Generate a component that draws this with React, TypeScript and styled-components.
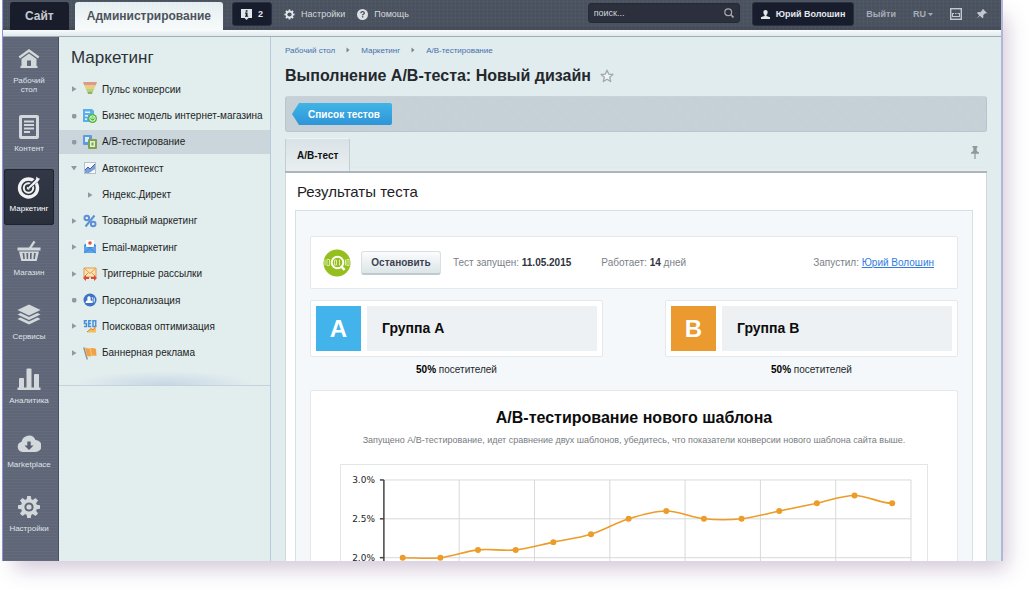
import React from "react";
import styled, { createGlobalStyle, css } from "styled-components";

const GlobalStyle = createGlobalStyle`
  * { box-sizing: border-box; }
  html, body { margin: 0; background: #fff; overflow: hidden; }
  body, button, input, select { font-family: "Liberation Sans", Arial, sans-serif; }
  ul, h1, h2, h3, p { margin: 0; padding: 0; }
  ul { list-style: none; }
  svg { display: block; flex: none; }
`;

/* ---------- Window ---------- */

const Page = styled.div`
  height: 100vh;
  padding: 0 26px 35px 2px;
  overflow: hidden;
`;

const Window = styled.div`
  display: flex;
  flex-direction: column;
  height: 100%;
  overflow: hidden;
  border-left: 1px solid #8c95cf;
  border-right: 2px solid #b2b7d8;
  background: #e1ecee;
  box-shadow: 8px 12px 20px -4px #d3c8d8;
`;

const Body = styled.div`
  display: flex;
  flex: 1;
  min-height: 0;
`;

/* ---------- Top bar ---------- */

const TopBar = styled.header`
  display: flex;
  justify-content: space-between;
  height: 30px;
  flex: none;
  padding: 2px 13px 0 7px;
  background:
    repeating-linear-gradient(90deg, #ffffff06 0 1px, #00000000 1px 4px),
    repeating-linear-gradient(0deg, #ffffff06 0 1px, #00000000 1px 4px),
    linear-gradient(#4b525f, #4a515e 85%, #414753);
`;

const Strip = styled.div`
  height: 7px;
  flex: none;
  background: linear-gradient(#f8fbfc, #dfe9ec);
  border-bottom: 1px solid #a4adb6;
`;

const BarSide = styled.div`
  display: flex;
  align-items: flex-start;
`;

const ModeTab = styled.a<{ $active?: boolean }>`
  display: flex;
  align-items: center;
  height: 28px;
  padding: 0 ${(p) => (p.$active ? 12 : 15)}px;
  margin-right: ${(p) => (p.$active ? 9 : 6)}px;
  border-radius: 3px 3px 0 0;
  font-size: 12px;
  font-weight: bold;
  text-decoration: none;
  color: ${(p) => (p.$active ? "#4d525c" : "#c6cad0")};
  background: ${(p) => (p.$active ? "linear-gradient(#e4edef, #f8fbfc)" : "#191d2b")};
`;

const DarkButton = styled.button`
  display: flex;
  align-items: center;
  justify-content: center;
  gap: 6px;
  height: 24px;
  padding: 0 8px;
  border: 1px solid #2a303e;
  border-radius: 3px;
  background: #171d2c;
  color: #e4e7ec;
  font-size: 9px;
  font-weight: bold;
  white-space: nowrap;
`;

const BarLink = styled.a`
  display: flex;
  align-items: center;
  gap: 6px;
  height: 24px;
  margin-left: 12px;
  color: #d5d9de;
  font-size: 9px;
  text-decoration: none;
`;

const Search = styled.label`
  display: flex;
  align-items: center;
  width: 152px;
  height: 20px;
  margin: 1px 12px 0 0;
  padding: 0 5px;
  border: 1px solid #262a36;
  border-radius: 3px;
  background: #2c303d;
`;

const SearchInput = styled.input`
  flex: 1;
  min-width: 0;
  padding: 0;
  border: 0;
  outline: 0;
  background: transparent;
  color: #e4e7ec;
  font-size: 9px;
  &::placeholder { color: #d0d4da; opacity: 1; }
`;

const MutedLink = styled(BarLink)`
  color: #a6acb6;
  font-weight: bold;
`;

const LangBox = styled.span`
  display: flex;
  align-items: center;
  gap: 2px;
  height: 24px;
  margin: 0 17px;
`;

const LangSelect = styled.select`
  appearance: none;
  padding: 0;
  border: 0;
  background: transparent;
  color: #a6acb6;
  font-size: 9px;
  font-weight: bold;
`;

const IconButton = styled.button`
  display: flex;
  align-items: center;
  height: 24px;
  padding: 0;
  margin-right: 14px;
  border: 0;
  background: none;
  &:last-child { margin-right: 0; }
`;

/* ---------- Section rail ---------- */

const Rail = styled.nav`
  display: flex;
  flex-direction: column;
  gap: 4px;
  width: 56px;
  flex: none;
  padding: 4px 4px 0 1px;
  background:
    repeating-linear-gradient(0deg, #ffffff08 0 1px, #00000000 1px 3px),
    #5f6678;
  border-right: 1px solid #4a5163;
`;

const RailGroup = styled.ul<{ $gap: number }>`
  display: flex;
  flex-direction: column;
  gap: ${(p) => p.$gap}px;
`;

const RailLink = styled.a<{ $active?: boolean }>`
  display: flex;
  flex-direction: column;
  align-items: center;
  gap: 5px;
  min-height: 56px;
  padding: 6px 0 11px;
  border-radius: 3px;
  color: #dfe3e8;
  font-size: 8px;
  line-height: 9px;
  text-align: center;
  white-space: pre-line;
  text-decoration: none;
  ${(p) =>
    p.$active &&
    css`
      background: linear-gradient(#333846, #2a2f3c);
      box-shadow: 0 0 0 1px #1f2430 inset;
      color: #fff;
    `}
`;

/* ---------- Tree menu ---------- */

const Side = styled.aside`
  width: 212px;
  flex: none;
  border-right: 1px solid #b7cade;
  background: #e2edee;
`;

const SideInner = styled.div`
  height: 349px;
  padding-top: 12px;
  border-bottom: 1px solid #c5d3dd;
  background: radial-gradient(90px 14px at 50% 100%, #c6d6e5, #c6d6e500);
`;

const SideTitle = styled.h2`
  padding-left: 12px;
  font-size: 17px;
  line-height: 18px;
  font-weight: normal;
  color: #2d3138;
`;

const Tree = styled.ul`
  display: grid;
  grid-auto-rows: 1fr;
  height: 290px;
  margin-top: 9px;
`;

const TreeItem = styled.li<{ $active?: boolean }>`
  display: flex;
  margin: 1px 0;
  background: ${(p) => (p.$active ? "#cbd6dc" : "transparent")};
`;

const TreeLink = styled.a<{ $nested?: boolean }>`
  display: flex;
  align-items: center;
  gap: 5px;
  padding-left: ${(p) => (p.$nested ? 24 : 11)}px;
  color: #1c1f24;
  font-size: 10px;
  white-space: nowrap;
  text-decoration: none;
`;

const Marker = styled.span<{ $nested?: boolean }>`
  display: flex;
  justify-content: center;
  width: ${(p) => (p.$nested ? 14 : 8)}px;
`;

/* ---------- Content ---------- */

const Content = styled.main`
  flex: 1;
  min-width: 0;
  padding: 7px 14px 0;
  overflow: hidden;
`;

const Crumbs = styled.nav`
  display: flex;
  align-items: center;
  gap: 11px;
  height: 12px;
`;

const CrumbLink = styled.a`
  color: #4470aa;
  font-size: 8px;
  text-decoration: none;
`;

const TitleRow = styled.div`
  display: flex;
  align-items: center;
  gap: 9px;
  height: 20px;
  margin-top: 10px;
`;

const Title = styled.h1`
  font-size: 16px;
  line-height: 20px;
  color: #24272c;
`;

const ToolBar = styled.div`
  display: flex;
  align-items: center;
  height: 36px;
  margin-top: 10px;
  padding: 0 6px;
  border: 1px solid #b9c5cc;
  border-top-color: #c8d2d8;
  border-radius: 3px;
  background: repeating-linear-gradient(45deg, #c7d2d8 0 1px, #c4cfd6 1px 2px);
`;

const BackButton = styled.button`
  height: 22px;
  width: 100px;
  padding: 0 0 0 4px;
  border: 0;
  border-radius: 2px;
  background: linear-gradient(#3fb5e6, #2f94d8);
  clip-path: polygon(7px 0, 100% 0, 100% 100%, 7px 100%, 0 50%);
  color: #fff;
  font-size: 10px;
  font-weight: bold;
`;

const Tabs = styled.div`
  display: flex;
  justify-content: space-between;
  align-items: flex-start;
  height: 35px;
  margin-top: 6px;
  border-bottom: 2px solid #aab5bc;
  background: linear-gradient(#dfe8ea, #eaf0f2) 0 100% / 100% 4px no-repeat;
`;

const Tab = styled.button`
  height: 33px;
  padding: 0 11px;
  border: 1px solid #c3cdd2;
  border-top-color: #edf3f4;
  border-bottom: 0;
  border-radius: 2px 2px 0 0;
  background: linear-gradient(#d9e2e5, #e9eff1);
  color: #111;
  font-size: 10px;
  font-weight: bold;
`;

const PinButton = styled.button`
  margin: 8px 8px 0 0;
  padding: 0;
  border: 0;
  background: none;
`;

const Panel = styled.section`
  padding: 10px 13px 0 9px;
  background: #fff;
  border-left: 1px solid #cfd9dd;
  border-right: 1px solid #cfd9dd;
`;

const PanelTitle = styled.h2`
  padding-left: 2px;
  font-size: 15px;
  line-height: 18px;
  font-weight: normal;
  color: #1e2125;
`;

const Well = styled.div`
  display: flex;
  flex-direction: column;
  gap: 11px;
  margin-top: 9px;
  padding: 25px 14px 40px;
  border: 1px solid #d6e1e6;
  background: #f4f8fa;
`;

const Card = styled.div`
  border: 1px solid #e6e9eb;
  border-radius: 2px;
  background: #fff;
`;

const StatusCard = styled(Card)`
  display: flex;
  align-items: center;
  height: 53px;
  padding: 0 23px 0 12px;
  color: #7c8087;
  font-size: 10px;
  white-space: nowrap;
  b { color: #2f3340; }
`;

const StopButton = styled.button`
  height: 24px;
  width: 80px;
  margin: 0 12px 0 10px;
  padding: 0;
  border: 1px solid #d9e0e3;
  border-bottom: 2px solid #bfc9ce;
  border-radius: 3px;
  background: linear-gradient(#fbfcfd, #dce5e8);
  color: #3b4150;
  font-size: 10px;
  font-weight: bold;
`;

const Running = styled.span`
  margin-left: 30px;
`;

const Author = styled.span`
  margin-left: auto;
  a { color: #2f7de0; }
`;

const Groups = styled.div`
  display: grid;
  grid-template-columns: 1fr 1fr;
  gap: 62px;
`;

const GroupCard = styled(Card)`
  display: flex;
  gap: 6px;
  padding: 5px;
`;

const Letter = styled.span<{ $color: string }>`
  display: flex;
  align-items: center;
  justify-content: center;
  width: 45px;
  height: 45px;
  background: ${(p) => p.$color};
  color: #fff;
  font-size: 24px;
  font-weight: bold;
`;

const GroupName = styled.h3`
  flex: 1;
  padding-left: 15px;
  background: #edf1f4;
  color: #0c0c0c;
  font-size: 14px;
  line-height: 45px;
`;

const Share = styled.p`
  margin-top: 6px;
  font-size: 10px;
  line-height: 14px;
  text-align: center;
  color: #25282d;
  b { color: #000; }
`;

const ReportCard = styled(Card)`
  padding: 17px 29px 20px;
  margin-top: 2px;
  text-align: center;
`;

const ReportTitle = styled.h3`
  font-size: 16px;
  line-height: 20px;
  color: #0c0c0c;
`;

const ReportText = styled.p`
  margin-top: 6px;
  font-size: 9px;
  line-height: 12px;
  color: #777b80;
`;

const ChartFrame = styled.div`
  margin-top: 18px;
  border: 1px solid #e4e5e7;
  svg { width: 100%; height: auto; }
`;

/* ---------- Rail icons ---------- */

const RailIcon = ({ children }: { children: React.ReactNode }) => (
  <svg width="24" height="24" viewBox="0 0 24 24" fill="#d3d8da">
    {children}
  </svg>
);

const GEAR_ANGLES = [0, 45, 90, 135, 180, 225, 270, 315];

const Gear = ({ hole }: { hole: string }) => (
  <>
    {GEAR_ANGLES.map((a) => (
      <path key={a} d="M10.200 1h3.600l.8 5h-5.200z" transform={`rotate(${a} 12 12)`} />
    ))}
    <circle cx="12" cy="12" r="8" />
    <circle cx="12" cy="12" r="4.600" fill={hole} />
  </>
);

const HomeIcon = (
  <RailIcon>
    <path d="M12 2 1.600 9.600l1.400 2L12 5l9 6.600 1.400-2z" />
    <path d="M12 6.600 4.500 12v9h15v-9zM10 20v-6.500h4V20z" fillRule="evenodd" />
    <rect x="3.500" y="19" width="17" height="2" />
  </RailIcon>
);
const DocIcon = (
  <RailIcon>
    <path d="M4 0h16a2 2 0 0 1 2 2v20a2 2 0 0 1-2 2H4a2 2 0 0 1-2-2V2a2 2 0 0 1 2-2zM5 3v18h14V3z" fillRule="evenodd" />
    <path d="M7 5.500h10v2H7zM7 9h10v2H7zM7 12.500h10v2H7zM7 16h6v2H7z" />
  </RailIcon>
);
const TargetIcon = (
  <RailIcon>
    <circle cx="11.500" cy="13" r="9" fill="none" stroke="#f0f2f3" strokeWidth="3.400" />
    <circle cx="11.500" cy="13" r="4.700" fill="none" stroke="#f0f2f3" strokeWidth="2" />
    <circle cx="11.500" cy="13" r="1.800" fill="#f0f2f3" />
    <path d="M11.500 13 19 5.500" stroke="#2e3340" strokeWidth="4" />
    <path d="m11 12.500 8-8 .4-3L21 3l2 .8-2 2.600-8.800 7.300z" fill="#f0f2f3" />
  </RailIcon>
);
const BasketIcon = (
  <RailIcon>
    <path d="m11.500 9.500 5-7.700 2 1.200-4.400 6.500z" />
    <path d="M.5 8.500h23v3h-23z" />
    <path d="M2 12.500h20l-2.300 9.500H4.300zM5.500 14l.8 6h1.500L7.300 14zM9.400 14l.3 6h1.500v-6zM13 14v6h1.500l.3-6zM17 14l-.6 6h1.500l.9-6z" fillRule="evenodd" />
  </RailIcon>
);
const LayersIcon = (
  <RailIcon>
    <path d="M12 1.500 23.500 7 12 12.500.5 7z" />
    <path d="m3.500 10-3 1.500L12 17l11.500-5.500-3-1.500-8.500 4z" />
    <path d="m3.500 14.500-3 1.500L12 21.500 23.500 16l-3-1.500-8.500 4z" />
  </RailIcon>
);
const BarsIcon = (
  <RailIcon>
    <rect x="2" y="11" width="5" height="11" rx="1" />
    <rect x="9.500" y="1.500" width="5" height="20.500" rx="1" />
    <rect x="17" y="7" width="5" height="15" rx="1" />
    <rect x=".5" y="20.500" width="23" height="2.500" />
  </RailIcon>
);
const CloudIcon = (
  <RailIcon>
    <path d="M5.500 21A5.200 5.200 0 0 1 4.600 10.800 7.300 7.300 0 0 1 18.500 9 6 6 0 0 1 18.500 21z" />
    <path d="M10.300 10.500h3.400v4h2.800L12 19l-4.500-4.500h2.800z" fill="#596073" />
  </RailIcon>
);
const SettingsIcon = (
  <RailIcon>
    <Gear hole="#5f6678" />
    <circle cx="12" cy="12" r="2.600" />
  </RailIcon>
);

/* ---------- Tree icons ---------- */

const TreeIcon = ({ children }: { children: React.ReactNode }) => (
  <svg width="14" height="14" viewBox="0 0 14 14">
    {children}
  </svg>
);

const FunnelIcon = (
  <TreeIcon>
    <path d="M0 0h14l-1.300 3.600H1.300z" fill="#dd9a88" />
    <path d="M1.500 3.600h11L11.400 6.600H2.600z" fill="#e8cf78" />
    <path d="M2.800 6.600h8.400L10 9.400H4z" fill="#c0cf72" />
    <path d="M4.200 9.400h5.600L9 12H5z" fill="#8fb35f" />
  </TreeIcon>
);
const ModelIcon = (
  <TreeIcon>
    <path d="M0 0h9l2 2v11H0z" fill="#5aaeea" />
    <path d="M2 2.500h5V4H2zM2 6h3v1.500H2zM2 9.500h2V11H2z" fill="#e8f4fd" />
    <circle cx="9.500" cy="9.500" r="4.500" fill="#4fb83a" />
    <circle cx="9.500" cy="9.500" r="2.700" fill="none" stroke="#fff" />
    <path d="M8 9h3" stroke="#fff" />
  </TreeIcon>
);
const AbIcon = (
  <TreeIcon>
    <rect width="9" height="10" rx="1" fill="#5d9be0" />
    <rect x="2" y="2" width="4" height="5" fill="#dcebfa" />
    <rect x="5" y="4" width="9" height="10" rx="1" fill="#7da44c" />
    <rect x="7" y="6" width="5" height="6" fill="#e5eed3" />
    <path d="M8.500 7.500h2v3h-2z" fill="#7da44c" />
  </TreeIcon>
);
const ContextIcon = (
  <TreeIcon>
    <rect x="1.500" y="1.500" width="11" height="11" fill="#f7f8fa" stroke="#b8bfc8" />
    <path d="M2 12V9l3-3 2 2 5-5v5L6 12z" fill="#7f9fd8" />
    <path d="m2 9 3-3 2 2 5-5" fill="none" stroke="#3763b0" />
  </TreeIcon>
);
const PercentIcon = (
  <TreeIcon>
    <g fill="none" stroke="#5b8fd6" strokeWidth="2">
      <circle cx="3.800" cy="4" r="2.300" />
      <circle cx="10.200" cy="10" r="2.300" />
      <path d="m11.500 1.500-9 11" />
    </g>
  </TreeIcon>
);
const MailIcon = (
  <TreeIcon>
    <path d="M1 5 7 1l6 4v8H1z" fill="#3f86d6" />
    <path d="M3 0h8v7H3z" fill="#fff" />
    <circle cx="7" cy="3" r="1.800" fill="#e2553d" />
    <path d="m1 5.500 6 3 6-3V13H1z" fill="#5ba2ea" />
    <path d="m1 13 6-4.500 6 4.500" fill="none" stroke="#3f86d6" />
  </TreeIcon>
);
const TriggerIcon = (
  <TreeIcon>
    <path d="M1 1h12v9H1z" fill="#fbe3b8" stroke="#e39a4a" />
    <path d="m1.500 1.500 5.500 5 5.500-5M1.500 9.500l4-4M12.500 9.500l-4-4" fill="none" stroke="#e39a4a" />
    <path d="m0 11 3-3v2h3v2H3v2zM14 11l-3-3v2H8v2h3v2z" fill="#dc4a3c" />
  </TreeIcon>
);
const PersonIcon = (
  <TreeIcon>
    <circle cx="7" cy="7" r="6.500" fill="#3e72c4" />
    <path d="M2.500 10q0-2.500 2-2.800-.8-4 1.500-4t1.500 4q2 .3 2 2.800z" fill="#fff" />
    <path d="M9 4q2.200 3 0 6M11 4.500q1.200 2.500 0 5" fill="none" stroke="#c9dcf5" />
  </TreeIcon>
);
const SeoIcon = (
  <TreeIcon>
    <g fill="none" stroke="#4a8fdc" strokeWidth="1.500">
      <path d="M4 1.800H1.500v2.700H3.500v3H1M8.300 1.800H5.800v5.700h2.500M6 4.600h2" />
      <rect x="10" y="1.800" width="2.700" height="5.700" />
    </g>
    <path d="M4 13.500h9V7l-3 4-2-1.500z" fill="#f0c060" />
    <path d="m4 13 4-3.500 2 1.500 3-4" fill="none" stroke="#e37b2d" />
  </TreeIcon>
);
const FlagIcon = (
  <TreeIcon>
    <path d="m.8 1.500 3.500 12" stroke="#8d8f92" strokeWidth="1.400" />
    <path d="M2 1.500q3 1.500 5.500.8T13 3l.5 7q-3-1-5 0t-4.700-.5z" fill="#f0a346" />
    <path d="M7.500 2.500 8.500 10" stroke="#f7c684" />
  </TreeIcon>
);

/* ---------- Small glyphs ---------- */

type Mark = "closed" | "open" | "dot";

const MarkGlyph = ({ kind }: { kind: Mark }) => (
  <svg width="8" height="8" viewBox="0 0 8 8" fill="#8d99a3">
    {kind === "closed" && <path d="M2 1.200 6.500 4 2 6.800z" />}
    {kind === "open" && <path d="M1 2h6L4 6.500z" />}
    {kind === "dot" && <rect x="2" y="2" width="4.400" height="4.400" rx="1.400" />}
  </svg>
);

const CrumbArrow = () => (
  <svg width="4" height="6" viewBox="0 0 4 6" fill="#7c868e">
    <path d="M.5.5 3.500 3l-3 2.500z" />
  </svg>
);

const NoteGlyph = () => (
  <svg width="11" height="11" viewBox="0 0 11 11">
    <path d="M0 0h11v9H7.500L5.500 11l-2-2H0z" fill="#e2e5ea" />
    <path d="M4.700 1.300h1.800v1.500H4.700zM4 3.600h2.500v3.200h.7v1H4v-1h.7V4.600H4z" fill="#171d2c" />
  </svg>
);

const GearGlyph = () => (
  <svg width="11" height="11" viewBox="0 0 24 24" fill="#e2e5ea">
    <Gear hole="#4a515e" />
  </svg>
);

const HelpGlyph = () => (
  <svg width="11" height="11" viewBox="0 0 12 12">
    <circle cx="6" cy="6" r="6" fill="#dde1e5" />
    <path d="M4.200 4.600q0-1.700 1.900-1.700T8 4.400q0 .8-1 1.300T6.100 7" fill="none" stroke="#4a515e" strokeWidth="1.400" />
    <rect x="5.400" y="7.800" width="1.500" height="1.500" fill="#4a515e" />
  </svg>
);

const LensGlyph = () => (
  <svg width="10" height="10" viewBox="0 0 10 10" fill="none" stroke="#a3a8b2">
    <circle cx="4.200" cy="4.200" r="3.400" strokeWidth="1.200" />
    <path d="m6.800 6.800 2.700 2.700" strokeWidth="1.600" />
  </svg>
);

const UserGlyph = () => (
  <svg width="9" height="9" viewBox="0 0 9 9" fill="#e4e7ec">
    <path d="M4.500 0Q7 0 6.600 2.500 6.400 4.500 5.400 5v.9L9 7.200V9H0V7.200l3.600-1.300V5q-1-.5-1.200-2.500Q2 0 4.500 0z" />
  </svg>
);

const PanelGlyph = () => (
  <svg width="12" height="12" viewBox="0 0 12 12" fill="none" stroke="#c3c8cf">
    <rect x=".7" y=".7" width="10.600" height="10.600" strokeWidth="1.400" />
    <path d="M2.500 8.500h7M2.500 5v4M9.500 5v4" />
    <path d="M2.500 5.500h7" strokeDasharray="1.500 1" />
  </svg>
);

const TiltedPin = () => (
  <svg width="12" height="12" viewBox="0 0 12 12" fill="#c3c8cf">
    <path d="m7 1 4 4-1 .6-.8-.3-2 2 .2 2-1 1-2.500-2.600L.5 11l2.700-3.800L1 5l1-1 2.200.2 2-2L6.200 1.600z" />
  </svg>
);

const UprightPin = () => (
  <svg width="8" height="13" viewBox="0 0 8 13" fill="#8f989e">
    <path d="M1.500 0h5v1.500h-.8V5L8 6.500v1.300H4.600V13H3.400V7.800H0V6.500L2.300 5V1.500h-.8z" />
  </svg>
);

const Star = () => (
  <svg width="14" height="14" viewBox="0 0 14 14">
    <path d="m7 1.200 1.700 3.900 4.200.4-3.200 2.800 1 4.200L7 10.300l-3.700 2.200 1-4.200L1.100 5.500l4.200-.4z" fill="#eef3f4" stroke="#a0a8ad" strokeWidth="1.300" strokeLinejoin="round" />
  </svg>
);

const TestBadge = () => (
  <svg width="28" height="28" viewBox="0 0 28 28">
    <circle cx="14" cy="14" r="13.500" fill="#94bf1c" />
    <g fill="none" stroke="#dcecaa">
      <path d="M2 10.500v6M4 10.500h2.500v6H4zM22.500 10.500v6M24 10.500h2v6h-2z" />
      <path d="M11.500 11h2v5h-2zM16.500 10.500v6" />
    </g>
    <circle cx="14.500" cy="13.500" r="5.800" fill="none" stroke="#fff" strokeWidth="2" />
    <path d="m18.500 17.500 3 3.500" stroke="#fff" strokeWidth="2.600" />
  </svg>
);

/* ---------- Data ---------- */

const mainSections = [
  { label: "Рабочий\nстол", icon: HomeIcon },
  { label: "Контент", icon: DocIcon },
];

const productSections = [
  { label: "Маркетинг", icon: TargetIcon, active: true },
  { label: "Магазин", icon: BasketIcon },
  { label: "Сервисы", icon: LayersIcon },
  { label: "Аналитика", icon: BarsIcon },
  { label: "Marketplace", icon: CloudIcon },
  { label: "Настройки", icon: SettingsIcon },
];

const tree: { label: string; mark: Mark; icon?: React.ReactNode; active?: boolean }[] = [
  { label: "Пульс конверсии", mark: "closed", icon: FunnelIcon },
  { label: "Бизнес модель интернет-магазина", mark: "dot", icon: ModelIcon },
  { label: "А/В-тестирование", mark: "dot", icon: AbIcon, active: true },
  { label: "Автоконтекст", mark: "open", icon: ContextIcon },
  { label: "Яндекс.Директ", mark: "closed" },
  { label: "Товарный маркетинг", mark: "closed", icon: PercentIcon },
  { label: "Email-маркетинг", mark: "closed", icon: MailIcon },
  { label: "Триггерные рассылки", mark: "closed", icon: TriggerIcon },
  { label: "Персонализация", mark: "dot", icon: PersonIcon },
  { label: "Поисковая оптимизация", mark: "closed", icon: SeoIcon },
  { label: "Баннерная реклама", mark: "closed", icon: FlagIcon },
];

const crumbs = ["Рабочий стол", "Маркетинг", "А/В-тестирование"];

const groups = [
  { letter: "A", name: "Группа A", color: "#43b4eb" },
  { letter: "B", name: "Группа B", color: "#ea9a2e" },
];

const conversion = [2, 2, 2.1, 2.1, 2.2, 2.3, 2.5, 2.6, 2.5, 2.5, 2.6, 2.7, 2.8, 2.7];

/* ---------- Chart ---------- */

const PLOT = { left: 43, right: 572, top: 15, unit: 78 };
const columns = 7;
const levels = [3, 2.5, 2];
const colWidth = (PLOT.right - PLOT.left) / columns;
const yOf = (v: number) => PLOT.top + (3 - v) * PLOT.unit;
const points = conversion.map((v, i) => ({ x: PLOT.left + (i + 0.5) * (colWidth / 2), y: yOf(v) }));

const slope = (i: number) => {
  if (i === 0 || i === points.length - 1) return 0;
  return (points[i + 1].y - points[i - 1].y) / 2;
};

const curve = points
  .map((p, i) => {
    if (i === 0) return `M${p.x} ${p.y}`;
    const q = points[i - 1];
    const third = (p.x - q.x) / 3;
    return `C${q.x + third} ${q.y + slope(i - 1) / 3} ${p.x - third} ${p.y - slope(i) / 3} ${p.x} ${p.y}`;
  })
  .join("");

const Chart = () => (
  <svg viewBox="0 0 588 120" role="img">
    {levels.map((v) => (
      <g key={v}>
        <path d={`M${PLOT.left} ${yOf(v)}H${PLOT.right}`} stroke="#d9d9d9" />
        <path d={`M${PLOT.left - 4} ${yOf(v)}h4`} stroke="#444" strokeWidth="1.500" />
        <text x="34" y={yOf(v) + 3} textAnchor="end" fontSize="9" fontFamily='"DejaVu Sans", sans-serif' fill="#222">
          {v.toFixed(1)}%
        </text>
      </g>
    ))}
    {Array.from({ length: columns }, (_, i) => (
      <path key={i} d={`M${PLOT.left + (i + 1) * colWidth} ${PLOT.top}V120`} stroke="#d9d9d9" />
    ))}
    <path d={`M${PLOT.left} ${PLOT.top}V120`} stroke="#444" strokeWidth="1.500" />
    <path d={curve} fill="none" stroke="#ec9c27" strokeWidth="1.600" />
    {points.map((p) => (
      <circle key={p.x} cx={p.x} cy={p.y} r="3" fill="#ec9c27" />
    ))}
  </svg>
);

/* ---------- App ---------- */

export default function App() {
  return (
    <Page>
      <GlobalStyle />
      <Window>
        <TopBar>
          <BarSide>
            <ModeTab href="#site">Сайт</ModeTab>
            <ModeTab href="#admin" $active>Администрирование</ModeTab>
            <DarkButton type="button"><NoteGlyph />2</DarkButton>
            <BarLink href="#settings"><GearGlyph />Настройки</BarLink>
            <BarLink href="#help"><HelpGlyph />Помощь</BarLink>
          </BarSide>
          <BarSide>
            <Search>
              <SearchInput type="search" placeholder="поиск..." />
              <LensGlyph />
            </Search>
            <DarkButton type="button"><UserGlyph />Юрий Волошин</DarkButton>
            <MutedLink href="#logout">Выйти</MutedLink>
            <LangBox>
              <LangSelect defaultValue="RU"><option>RU</option></LangSelect>
              <svg width="5" height="3" viewBox="0 0 5 3" fill="#a6acb6"><path d="M0 0h5L2.500 3z" /></svg>
            </LangBox>
            <IconButton type="button"><PanelGlyph /></IconButton>
            <IconButton type="button"><TiltedPin /></IconButton>
          </BarSide>
        </TopBar>
        <Strip />
        <Body>
          <Rail>
            <RailGroup $gap={4}>
              {mainSections.map((s) => (
                <li key={s.label}><RailLink href="#section">{s.icon}{s.label}</RailLink></li>
              ))}
            </RailGroup>
            <RailGroup $gap={8}>
              {productSections.map((s) => (
                <li key={s.label}><RailLink href="#section" $active={s.active}>{s.icon}{s.label}</RailLink></li>
              ))}
            </RailGroup>
          </Rail>
          <Side>
            <SideInner>
              <SideTitle>Маркетинг</SideTitle>
              <Tree>
                {tree.map((t) => (
                  <TreeItem key={t.label} $active={t.active}>
                    <TreeLink href="#item" $nested={!t.icon}>
                      <Marker $nested={!t.icon}><MarkGlyph kind={t.mark} /></Marker>
                      {t.icon}
                      {t.label}
                    </TreeLink>
                  </TreeItem>
                ))}
              </Tree>
            </SideInner>
          </Side>
          <Content>
            <Crumbs>
              {crumbs.map((c, i) => (
                <React.Fragment key={c}>
                  {i > 0 && <CrumbArrow />}
                  <CrumbLink href="#crumb">{c}</CrumbLink>
                </React.Fragment>
              ))}
            </Crumbs>
            <TitleRow>
              <Title>Выполнение А/В-теста: Новый дизайн</Title>
              <Star />
            </TitleRow>
            <ToolBar><BackButton type="button">Список тестов</BackButton></ToolBar>
            <Tabs>
              <Tab type="button">А/В-тест</Tab>
              <PinButton type="button"><UprightPin /></PinButton>
            </Tabs>
            <Panel>
              <PanelTitle>Результаты теста</PanelTitle>
              <Well>
                <StatusCard>
                  <TestBadge />
                  <StopButton type="button">Остановить</StopButton>
                  <span>Тест запущен: <b>11.05.2015</b></span>
                  <Running>Работает: <b>14</b> дней</Running>
                  <Author>Запустил: <a href="#user">Юрий Волошин</a></Author>
                </StatusCard>
                <Groups>
                  {groups.map((g) => (
                    <div key={g.letter}>
                      <GroupCard>
                        <Letter $color={g.color}>{g.letter}</Letter>
                        <GroupName>{g.name}</GroupName>
                      </GroupCard>
                      <Share><b>50%</b> посетителей</Share>
                    </div>
                  ))}
                </Groups>
                <ReportCard>
                  <ReportTitle>А/В-тестирование нового шаблона</ReportTitle>
                  <ReportText>
                    Запущено А/В-тестирование, идет сравнение двух шаблонов, убедитесь, что показатели конверсии нового шаблона сайта выше.
                  </ReportText>
                  <ChartFrame><Chart /></ChartFrame>
                </ReportCard>
              </Well>
            </Panel>
          </Content>
        </Body>
      </Window>
    </Page>
  );
}
